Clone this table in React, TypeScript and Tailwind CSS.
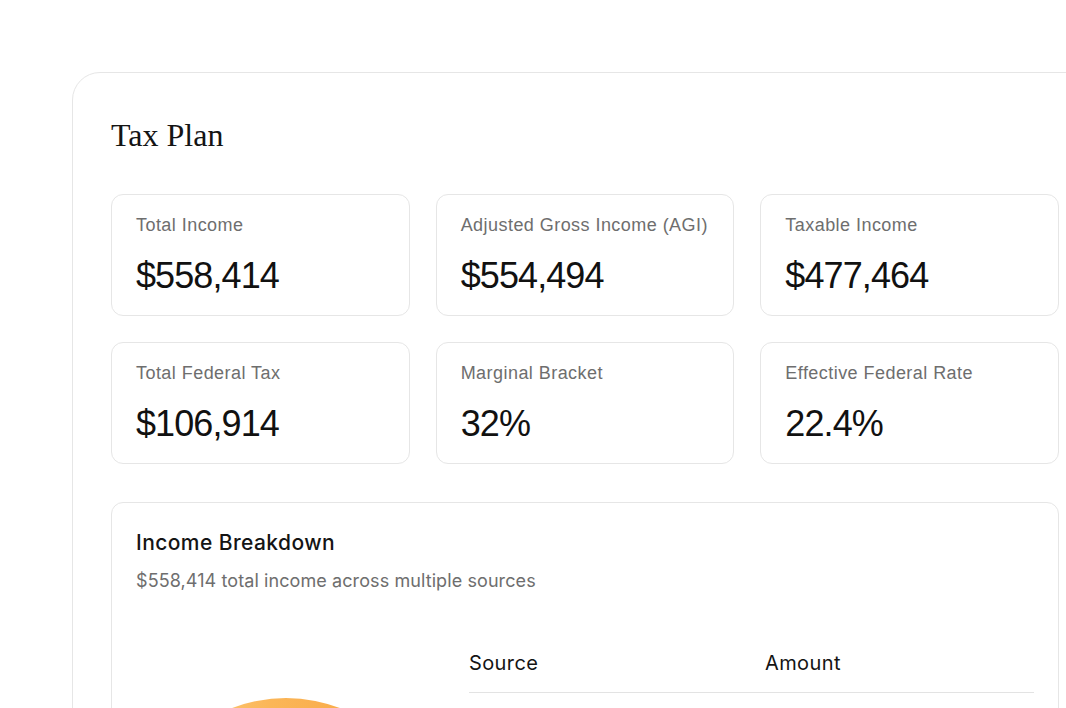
const stats = [
  { label: 'Total Income', value: '$558,414' },
  { label: 'Adjusted Gross Income (AGI)', value: '$554,494' },
  { label: 'Taxable Income', value: '$477,464' },
  { label: 'Total Federal Tax', value: '$106,914' },
  { label: 'Marginal Bracket', value: '32%' },
  { label: 'Effective Federal Rate', value: '22.4%' },
];

function StatCard({ label, value }: { label: string; value: string }) {
  return (
    <div className="h-[122px] rounded-[12px] border border-[#e6e6e6] px-6 pt-[18px]">
      <p className="text-[18px] leading-6 tracking-[0.025em] text-[#6e6e6e]">{label}</p>
      <p className="mt-[19px] text-[36px] leading-10 tracking-[-0.025em] text-[#111]">{value}</p>
    </div>
  );
}

function IncomePie() {
  return (
    <svg width="300" height="300" viewBox="0 0 300 300">
      <defs>
        <linearGradient id="orange" x1="0" y1="0" x2="1" y2="0">
          <stop offset="0%" stopColor="#fdd590" />
          <stop offset="45%" stopColor="#fbb658" />
          <stop offset="100%" stopColor="#f7a13a" />
        </linearGradient>
      </defs>
      <circle cx="150" cy="150" r="150" fill="url(#orange)" />
      <path d="M150 150 L300 150 A150 150 0 0 1 60 270 Z" fill="#f4d7a8" />
      <path d="M150 150 L60 270 A150 150 0 0 1 0 150 Z" fill="#e9e2d6" />
    </svg>
  );
}

const inter = { fontFamily: 'Inter, "Liberation Sans", sans-serif' };

export default function App() {
  return (
    <div
      className="h-[708px] w-[1066px] overflow-hidden bg-white"
      style={{ fontFamily: '"Liberation Sans", Arial, sans-serif' }}
    >
      <div className="ml-[72px] mt-[72px] w-[1026px] rounded-t-[28px] border border-[#e6e6e6] px-[38px] pt-[43px] pb-10">
        <h1
          className="text-[32px] leading-[38px] text-[#141414]"
          style={{ fontFamily: '"Liberation Serif", "Times New Roman", serif' }}
        >
          Tax Plan
        </h1>

        <div className="mt-[40px] grid grid-cols-3 gap-[26px]">
          {stats.map((s) => (
            <StatCard key={s.label} label={s.label} value={s.value} />
          ))}
        </div>

        <div className="mt-[38px] rounded-[12px] border border-[#e6e6e6] px-6 pt-[26px] pb-8" style={inter}>
          <h2 className="text-[21px] font-medium leading-7 tracking-[0.02em] text-[#141414]">
            Income Breakdown
          </h2>
          <p className="mt-[12px] text-[18px] leading-6 tracking-[0.005em] text-[#6e6e6e]">
            $558,414 total income across multiple sources
          </p>

          <div className="mt-[42px] flex gap-6">
            <div className="w-[309px] shrink-0 pt-[63px]">
              <IncomePie />
            </div>
            <div className="flex-1">
              <div className="grid grid-cols-[296px_1fr] border-b border-[#e3e3e3] pt-[16px] pb-[17px] text-[20px] leading-6 tracking-[0.02em] text-[#141414]">
                <span>Source</span>
                <span>Amount</span>
              </div>
            </div>
          </div>
        </div>
      </div>
    </div>
  );
}
